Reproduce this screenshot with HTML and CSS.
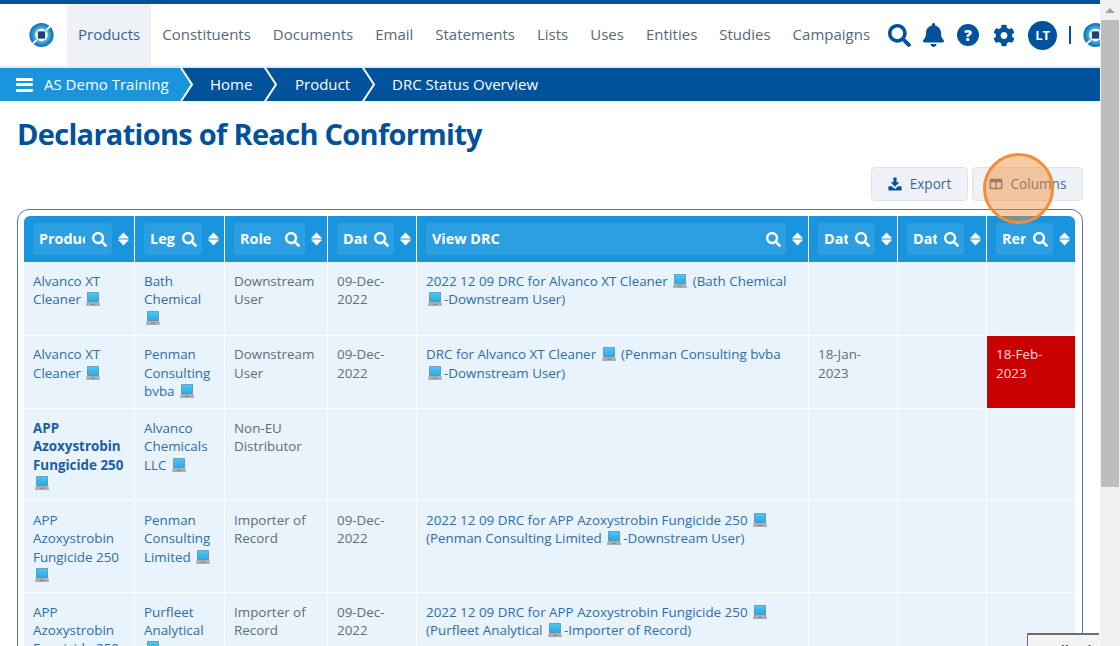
FILE: index.html
```html
<!DOCTYPE html>
<html lang="en">
<head>
<meta charset="utf-8">
<title>Declarations of Reach Conformity</title>
<link rel="stylesheet" href="styles.css">
</head>
<body>
<svg class="defs" aria-hidden="true">
  <defs>
    <radialGradient id="logo-grad" cx="50%" cy="50%" r="50%">
      <stop offset="45%" stop-color="#7cc4e8"/>
      <stop offset="72%" stop-color="#2a94cf"/>
      <stop offset="100%" stop-color="#0f6fae"/>
    </radialGradient>
    <linearGradient id="lap-grad" x1="0" y1="0" x2="0" y2="1">
      <stop offset="0" stop-color="#4cc8f6"/>
      <stop offset="1" stop-color="#2aa9e6"/>
    </linearGradient>
  </defs>
  <symbol id="i-search" viewBox="0 0 512 512"><path d="M505 442.7L405.3 343c-4.5-4.5-10.6-7-17-7H372c27.6-35.3 44-79.7 44-128C416 93.1 322.9 0 208 0S0 93.1 0 208s93.1 208 208 208c48.3 0 92.7-16.4 128-44v16.3c0 6.4 2.5 12.5 7 17l99.7 99.7c9.4 9.4 24.6 9.4 33.9 0l28.3-28.3c9.4-9.4 9.4-24.6.1-34zM208 336c-70.7 0-128-57.2-128-128 0-70.7 57.2-128 128-128 70.7 0 128 57.2 128 128 0 70.7-57.2 128-128 128z"/></symbol>
  <symbol id="i-bell" viewBox="0 0 448 512"><path d="M224 512c35.32 0 63.97-28.65 63.97-64H160.03c0 35.35 28.65 64 63.97 64zm215.39-149.71c-19.32-20.76-55.47-51.99-55.47-154.29 0-77.7-54.48-139.9-127.94-155.16V32c0-17.67-14.32-32-31.98-32s-31.98 14.33-31.98 32v20.84C118.56 68.1 64.08 130.3 64.08 208c0 102.3-36.15 133.53-55.47 154.29-6 6.45-8.66 14.16-8.61 21.71.11 16.4 12.98 32 32.1 32h383.8c19.12 0 32-15.6 32.1-32 .05-7.55-2.61-15.27-8.61-21.71z"/></symbol>
  <symbol id="i-gear" viewBox="0 0 512 512"><path d="M487.4 315.7l-42.6-24.6c4.3-23.2 4.3-47 0-70.2l42.6-24.6c4.9-2.8 7.1-8.6 5.5-14-11.1-35.6-30-67.8-54.7-94.6-3.8-4.1-10-5.1-14.8-2.3L380.8 110c-17.9-15.4-38.5-27.3-60.8-35.1V25.8c0-5.6-3.9-10.5-9.4-11.7-36.7-8.2-74.3-7.8-109.2 0-5.5 1.2-9.4 6.1-9.4 11.7V75c-22.2 7.9-42.8 19.8-60.8 35.1L88.7 85.5c-4.9-2.8-11-1.9-14.8 2.3-24.7 26.7-43.6 58.9-54.7 94.6-1.7 5.4.6 11.2 5.5 14L67.3 221c-4.3 23.2-4.3 47 0 70.2l-42.6 24.6c-4.9 2.8-7.1 8.6-5.5 14 11.1 35.6 30 67.8 54.7 94.6 3.8 4.1 10 5.1 14.8 2.3l42.6-24.6c17.9 15.4 38.5 27.3 60.8 35.1v49.2c0 5.6 3.9 10.5 9.4 11.7 36.7 8.2 74.3 7.8 109.2 0 5.5-1.2 9.4-6.1 9.4-11.7v-49.2c22.2-7.9 42.8-19.8 60.8-35.1l42.6 24.6c4.9 2.8 11 1.9 14.8-2.3 24.7-26.7 43.6-58.9 54.7-94.6 1.5-5.5-.7-11.3-5.6-14.1zM256 336c-44.1 0-80-35.9-80-80s35.9-80 80-80 80 35.9 80 80-35.9 80-80 80z"/></symbol>
  <symbol id="i-sort" viewBox="0 0 11 14"><path d="M5.5 0.5L10.5 5.8C10.8 6.2 10.6 6.5 10.2 6.5H0.8C0.4 6.5 0.2 6.2 0.5 5.8Z"/><path d="M5.5 13.5L10.5 8.2C10.8 7.8 10.6 7.5 10.2 7.5H0.8C0.4 7.5 0.2 7.8 0.5 8.2Z"/></symbol>
  <symbol id="i-laptop" viewBox="0 0 14 14">
    <rect x="1" y="0" width="12" height="10" rx="1" fill="#7f8a92"/>
    <rect x="1.6" y="0.6" width="10.8" height="8.8" fill="url(#lap-grad)"/>
    <path d="M0.6 10H13.4L14 14H0Z" fill="#a8afb4"/>
    <rect x="5" y="11.8" width="4" height="0.8" fill="#6f787e"/>
  </symbol>
  <symbol id="i-logo" viewBox="0 0 26 26">
    <circle cx="13" cy="13" r="12.6" fill="url(#logo-grad)"/>
    <circle cx="13" cy="13" r="6.4" fill="#fff"/>
    <path d="M18 8L24 2M8 18L2 24" stroke="#fff" stroke-width="1.8"/>
    <rect x="9.2" y="9.2" width="7.6" height="7.6" fill="#1d3f7a"/>
  </symbol>
</svg>

<div class="viewport">
  <div class="page">
    <header class="topnav">
      <a class="brand"><svg class="logo"><use href="#i-logo"/></svg></a>
      <nav class="menu">
        <a class="menu-item active">Products</a>
        <a class="menu-item">Constituents</a>
        <a class="menu-item">Documents</a>
        <a class="menu-item">Email</a>
        <a class="menu-item">Statements</a>
        <a class="menu-item">Lists</a>
        <a class="menu-item">Uses</a>
        <a class="menu-item">Entities</a>
        <a class="menu-item">Studies</a>
        <a class="menu-item">Campaigns</a>
      </nav>
      <div class="tools">
        <svg class="tool-search"><use href="#i-search"/></svg>
        <svg class="tool-bell"><use href="#i-bell"/></svg>
        <span class="tool-help">?</span>
        <svg class="tool-gear"><use href="#i-gear"/></svg>
        <span class="avatar">LT</span>
        <span class="divider"></span>
        <svg class="logo logo-end"><use href="#i-logo"/></svg>
      </div>
    </header>

    <div class="crumbs">
      <a class="crumb crumb-first">
        <span class="burger"><i></i><i></i><i></i></span>AS Demo Training
        <svg class="chev" viewBox="0 0 14 33"><path class="chev-fill" d="M0 0L12 16.5L0 33Z"/><path class="chev-line" d="M0.5 -1L12 16.5L0.5 34"/></svg>
      </a>
      <a class="crumb crumb-home">Home
        <svg class="chev" viewBox="0 0 14 33"><path class="chev-line" d="M0.5 -1L12 16.5L0.5 34"/></svg>
      </a>
      <a class="crumb crumb-product">Product
        <svg class="chev" viewBox="0 0 14 33"><path class="chev-line" d="M0.5 -1L12 16.5L0.5 34"/></svg>
      </a>
      <a class="crumb crumb-last">DRC Status Overview</a>
    </div>

    <main class="content">
      <h1 class="title">Declarations of Reach Conformity</h1>
      <div class="actions">
        <button class="btn btn-export">
          <svg class="btn-icon" viewBox="0 0 16 16"><path d="M6.2 0.5H9.8V6H13L8 11.2L3 6H6.2Z"/><path d="M0.5 10.5H4.4L8 13.6L11.6 10.5H15.5V15.5H0.5Z"/></svg>Export
        </button>
        <button class="btn btn-columns">
          <svg class="btn-icon" viewBox="0 0 16 16"><path d="M1.5 2H14.5C15 2 15.2 2.3 15.2 2.7V13.3C15.2 13.7 15 14 14.5 14H1.5C1 14 0.8 13.7 0.8 13.3V2.7C0.8 2.3 1 2 1.5 2ZM2.4 6V12.4H7.2V6ZM8.8 6V12.4H13.6V6Z"/></svg>Columns
        </button>
      </div>

      <div class="frame">
        <table class="grid">
          <colgroup>
            <col class="c1"><col class="c2"><col class="c3"><col class="c4"><col class="c5"><col class="c6"><col class="c7"><col class="c8">
          </colgroup>
          <thead>
            <tr>
              <th><div class="th"><div class="pill"><span class="lbl">Product</span><svg class="s"><use href="#i-search"/></svg></div><svg class="o"><use href="#i-sort"/></svg></div></th>
              <th><div class="th"><div class="pill"><span class="lbl">Legal</span><svg class="s"><use href="#i-search"/></svg></div><svg class="o"><use href="#i-sort"/></svg></div></th>
              <th><div class="th"><div class="pill"><span class="lbl">Role</span><svg class="s"><use href="#i-search"/></svg></div><svg class="o"><use href="#i-sort"/></svg></div></th>
              <th><div class="th"><div class="pill"><span class="lbl">Date</span><svg class="s"><use href="#i-search"/></svg></div><svg class="o"><use href="#i-sort"/></svg></div></th>
              <th><div class="th"><div class="pill"><span class="lbl">View DRC</span><svg class="s"><use href="#i-search"/></svg></div><svg class="o"><use href="#i-sort"/></svg></div></th>
              <th><div class="th"><div class="pill"><span class="lbl">Date</span><svg class="s"><use href="#i-search"/></svg></div><svg class="o"><use href="#i-sort"/></svg></div></th>
              <th><div class="th"><div class="pill"><span class="lbl">Date</span><svg class="s"><use href="#i-search"/></svg></div><svg class="o"><use href="#i-sort"/></svg></div></th>
              <th><div class="th"><div class="pill"><span class="lbl">Renew</span><svg class="s"><use href="#i-search"/></svg></div><svg class="o"><use href="#i-sort"/></svg></div></th>
            </tr>
          </thead>
          <tbody>
            <tr>
              <td><a>Alvanco XT Cleaner <svg class="lap"><use href="#i-laptop"/></svg></a></td>
              <td><a>Bath Chemical <svg class="lap"><use href="#i-laptop"/></svg></a></td>
              <td>Downstream User</td>
              <td>09-Dec-2022</td>
              <td><a>2022 12 09 DRC for Alvanco XT Cleaner <svg class="lap"><use href="#i-laptop"/></svg> (Bath Chemical <svg class="lap"><use href="#i-laptop"/></svg>-Downstream User)</a></td>
              <td></td><td></td><td></td>
            </tr>
            <tr>
              <td><a>Alvanco XT Cleaner <svg class="lap"><use href="#i-laptop"/></svg></a></td>
              <td><a>Penman Consulting bvba <svg class="lap"><use href="#i-laptop"/></svg></a></td>
              <td>Downstream User</td>
              <td>09-Dec-2022</td>
              <td><a>DRC for Alvanco XT Cleaner <svg class="lap"><use href="#i-laptop"/></svg> (Penman Consulting bvba <svg class="lap"><use href="#i-laptop"/></svg>-Downstream User)</a></td>
              <td>18-Jan-2023</td><td></td><td class="overdue">18-Feb-2023</td>
            </tr>
            <tr>
              <td><a class="strong">APP Azoxystrobin Fungicide 250 <svg class="lap"><use href="#i-laptop"/></svg></a></td>
              <td><a>Alvanco Chemicals LLC <svg class="lap"><use href="#i-laptop"/></svg></a></td>
              <td>Non-EU Distributor</td>
              <td></td><td></td><td></td><td></td><td></td>
            </tr>
            <tr>
              <td><a>APP Azoxystrobin Fungicide 250 <svg class="lap"><use href="#i-laptop"/></svg></a></td>
              <td><a>Penman Consulting Limited <svg class="lap"><use href="#i-laptop"/></svg></a></td>
              <td>Importer of Record</td>
              <td>09-Dec-2022</td>
              <td><a>2022 12 09 DRC for APP Azoxystrobin Fungicide 250 <svg class="lap"><use href="#i-laptop"/></svg> (Penman Consulting Limited <svg class="lap"><use href="#i-laptop"/></svg>-Downstream User)</a></td>
              <td></td><td></td><td></td>
            </tr>
            <tr>
              <td><a>APP Azoxystrobin Fungicide 250 <svg class="lap"><use href="#i-laptop"/></svg></a></td>
              <td><a>Purfleet Analytical <svg class="lap"><use href="#i-laptop"/></svg></a></td>
              <td>Importer of Record</td>
              <td>09-Dec-2022</td>
              <td><a>2022 12 09 DRC for APP Azoxystrobin Fungicide 250 <svg class="lap"><use href="#i-laptop"/></svg> (Purfleet Analytical <svg class="lap"><use href="#i-laptop"/></svg>-Importer of Record)</a></td>
              <td></td><td></td><td></td>
            </tr>
          </tbody>
        </table>
      </div>
    </main>

    <div class="highlight"></div>
    <div class="feedback">Feedback</div>
  </div>

  <aside class="scrollbar">
    <span class="scroll-up"></span>
    <span class="scroll-thumb"></span>
  </aside>
</div>
</body>
</html>
```

FILE: styles.css
```css
* { box-sizing: border-box; }
html, body { margin: 0; height: 100%; overflow: hidden; }
body {
  font-family: "Open Sans", "Noto Sans", sans-serif;
  font-size: 13.4px;
  line-height: 18.4px;
  color: #5f6d79;
  background: #fff;
}
.defs { position: absolute; width: 0; height: 0; }

.viewport { display: flex; width: 1120px; height: 646px; overflow: hidden; }
.page { position: relative; width: 1100px; height: 646px; overflow: hidden; flex: none; }

/* scrollbar */
.scrollbar { width: 20px; flex: none; background: #f1f1f1; padding: 0 1px; display: flex; flex-direction: column; align-items: stretch; }
.scroll-up { height: 20px; position: relative; flex: none; }
.scroll-up::before {
  content: ""; position: absolute; left: 4px; top: 8px;
  border-left: 5px solid transparent; border-right: 5px solid transparent; border-bottom: 5px solid #a3a3a3;
}
.scroll-thumb { height: 467px; background: #bdbdbd; }

/* top nav */
.topnav {
  display: flex; align-items: stretch; box-sizing: content-box; height: 62px;
  border-top: 4px solid #00529b; border-bottom: 2px solid #e6e8ea;
  background: #fff;
}
.brand { width: 67px; flex: none; display: flex; align-items: center; padding-left: 29px; }
.logo { width: 25px; height: 26px; display: block; flex: none; }
.menu { display: flex; align-items: stretch; }
.menu-item {
  display: flex; align-items: center; padding: 0 11px 2px;
  font-size: 15px; color: #566878;
}
.menu-item.active { background: #eef1f6; color: #2f6499; }
.tools { display: flex; align-items: center; fill: #00529b; }
.tool-search { width: 23px; height: 23px; margin-left: 7px; }
.tool-bell { width: 21px; height: 24px; margin-left: 12px; }
.tool-help {
  width: 22px; height: 22px; border-radius: 50%; margin-left: 13px; background: #00529b;
  color: #fff; font-weight: 800; font-size: 15px; line-height: 22px; text-align: center;
}
.tool-gear { width: 22px; height: 23px; margin-left: 14px; }
.avatar {
  width: 29px; height: 29px; border-radius: 50%; margin-left: 13px; background: #00529b;
  color: #fff; font-weight: 700; font-size: 13px; line-height: 29px; text-align: center;
}
.divider { width: 2px; height: 18px; background: #00529b; margin-left: 12px; }
.logo-end { margin-left: 12px; }

/* breadcrumb */
.crumbs { display: flex; height: 33px; background: #00529b; color: #fff; font-size: 15px; line-height: 33px; }
.crumb { position: relative; display: block; white-space: nowrap; }
.crumb-first { background: #1a94dc; width: 180px; padding-left: 16px; display: flex; align-items: center; }
.crumb-home { width: 84px; padding-left: 30px; }
.crumb-product { width: 98px; padding-left: 31px; }
.crumb-last { padding-left: 30px; }
.burger { display: flex; flex-direction: column; justify-content: space-between; width: 17px; height: 14px; margin-right: 11px; }
.burger i { display: block; height: 3px; background: #fff; border-radius: 1px; }
.chev { position: absolute; top: 0; left: 100%; width: 14px; height: 33px; overflow: visible; }
.chev-fill { fill: #1a94dc; }
.chev-line { fill: none; stroke: #fff; stroke-width: 2; }

/* content */
.content { padding: 0 17px; }
.title {
  margin: 17px 0 0; font-size: 29px; line-height: 32px; font-weight: 700;
  color: #00529b; letter-spacing: -0.7px;
}
.actions { display: flex; justify-content: flex-end; gap: 4px; margin-top: 17px; }
.btn {
  height: 34px; border: 1px solid #dfe4ea; border-radius: 4px; background: #eef1f6;
  font: 13.6px/18px "Open Sans", sans-serif; color: #3b6a97;
  display: flex; align-items: center; justify-content: center; padding: 0; gap: 8px;
}
.btn-export { width: 97px; }
.btn-columns { width: 111px; }
.btn-icon { width: 14px; height: 14px; fill: #00529b; }
.btn-columns .btn-icon { fill: #4a6d8c; }

.frame {
  margin-top: 8px; padding: 6px; border: 1px solid #4f7a99; border-radius: 12px;
  width: 1066px; height: 500px; overflow: hidden; background: #fff;
}
.grid { table-layout: fixed; width: 1051px; border-collapse: separate; border-spacing: 0; }
.c1 { width: 111px; } .c2 { width: 90px; } .c3 { width: 103px; } .c4 { width: 89px; }
.c5 { width: 392px; } .c6 { width: 89px; } .c7 { width: 89px; } .c8 { width: 88px; }

.grid th {
  background: #1a94dc; padding: 7px 5px 7px 9px; height: 46px;
  border-right: 1px solid #fff; text-align: left;
}
.grid th:first-child { border-top-left-radius: 6px; }
.grid th:last-child { border-top-right-radius: 6px; border-right: 0; }
.th { display: flex; align-items: center; justify-content: space-between; }
.pill {
  flex: 1; min-width: 0; height: 32px; border-radius: 4px; background: #2b9fe2;
  display: flex; align-items: center; padding: 0 5px 0 6px; margin-right: 6px; gap: 7px;
}
.lbl { flex: 1; min-width: 0; overflow: hidden; white-space: nowrap; color: #fff; font-weight: 700; font-size: 14.4px; }
.s { width: 15px; height: 15px; fill: #fff; flex: none; }
.o { width: 11px; height: 14px; fill: #fff; flex: none; }

.grid td {
  background: #e8f3fb; padding: 9.8px 9px 7.5px 9px; vertical-align: top;
  border-right: 1px solid #fff; border-bottom: 1px solid #fff;
}
.grid td:last-child { border-right: 0; }
.grid td a { color: #2f6da6; }
.grid td a.strong { color: #1c5f9e; font-weight: 700; }
.grid td.overdue { background: #c90000; color: #f7dede; }
.lap { width: 14px; height: 14px; vertical-align: -2px; margin: 0 2px; }

/* overlays */
.highlight {
  position: absolute; left: 983px; top: 153px; width: 71px; height: 71px; border-radius: 50%;
  border: 3px solid #f28d38; background: rgba(244, 141, 56, 0.45);
}
.feedback {
  position: absolute; left: 1027px; top: 633px; width: 72px; height: 30px;
  background: #f4f4f4; border-top: 2px solid #6e6e6e; border-left: 1px solid #6e6e6e;
  padding: 6px 0 0 6px; font-size: 13px; font-weight: 700; color: #444;
}
```
